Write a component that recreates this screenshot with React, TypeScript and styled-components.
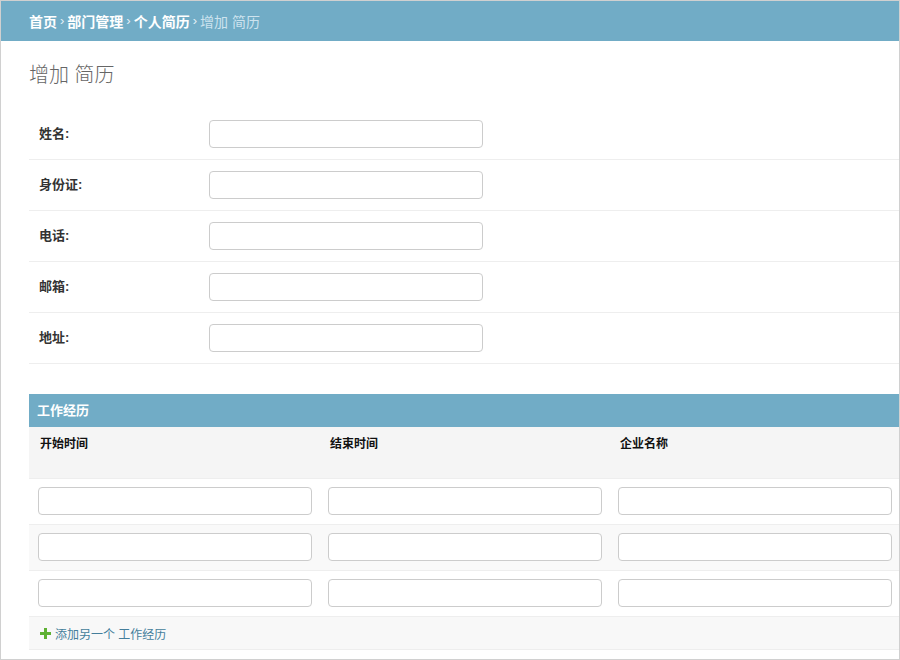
import React from 'react';
import styled, { createGlobalStyle } from 'styled-components';

const GlobalStyle = createGlobalStyle`
  html, body {
    margin: 0;
    padding: 0;
  }
  body {
    font-family: "Liberation Sans", "Noto Sans CJK SC", sans-serif;
    color: #333;
    background: #fff;
  }
  * {
    box-sizing: border-box;
  }
`;

const Page = styled.div`
  width: 900px;
  height: 660px;
  border: 1px solid #d0d0d0;
  overflow: hidden;
  background: #fff;
`;

const Breadcrumbs = styled.div`
  height: 40px;
  background: #71acc6;
  padding: 0 28px 1px;
  display: flex;
  align-items: center;
  font-size: 14px;
  color: #fff;
`;

const Crumb = styled.span<{ $current?: boolean }>`
  font-weight: ${(p) => (p.$current ? 400 : 700)};
  color: ${(p) => (p.$current ? '#cde3ee' : '#fff')};
`;

const Sep = styled.span`
  margin: 0 3px;
  font-size: 13px;
  color: #e4f0f6;
`;

const Content = styled.div`
  padding: 22px 0 0 28px;
`;

const Title = styled.h1`
  margin: 0 0 22px;
  font-size: 20px;
  line-height: 24px;
  font-weight: 300;
  color: #666;
`;

const FormRow = styled.div`
  display: flex;
  align-items: center;
  padding: 11px 10px;
  border-bottom: 1px solid #eee;
`;

const Label = styled.label`
  width: 170px;
  font-size: 13px;
  line-height: 16px;
  margin-top: -1px;
  font-weight: 700;
  color: #333;
`;

const TextInput = styled.input`
  width: 274px;
  height: 28px;
  border: 1px solid #ccc;
  border-radius: 4px;
  padding: 5px 6px;
  background: #fff;
  font-size: 13px;
  outline: none;
`;

const InlineGroup = styled.div`
  margin-top: 30px;
`;

const GroupHeader = styled.h2`
  margin: 0;
  height: 33px;
  line-height: 33px;
  padding: 0 8px;
  background: #71acc6;
  color: #fff;
  font-size: 13px;
  font-weight: 700;
`;

const Grid = styled.div`
  display: grid;
  grid-template-columns: repeat(3, minmax(0, 1fr));
`;

const HeadCell = styled.div`
  height: 52px;
  padding: 9px 11px 0;
  background: #f5f5f5;
  border-bottom: 1px solid #eee;
  font-size: 12px;
  line-height: 17px;
  font-weight: 700;
  color: #111;
`;

const Cell = styled.div<{ $alt?: boolean }>`
  padding: 8px 7px 9px 9px;
  background: ${(p) => (p.$alt ? '#f9f9f9' : '#fff')};
  border-bottom: 1px solid #eee;
`;

const AddRow = styled.div`
  height: 33px;
  display: flex;
  align-items: center;
  gap: 4px;
  padding: 0 11px;
  background: #f8f8f8;
  border-bottom: 1px solid #eee;
  font-size: 12px;
  color: #447e9b;
`;

const PlusIcon = () => (
  <svg width="11" height="11" viewBox="0 0 11 11">
    <path d="M4 0h3v4h4v3H7v4H4V7H0V4h4z" fill="#5eb133" />
  </svg>
);

const fields = ['姓名', '身份证', '电话', '邮箱', '地址'];
const columns = ['开始时间', '结束时间', '企业名称'];
const rows = [0, 1, 2];

export default function App(): JSX.Element {
  return (
    <Page>
      <GlobalStyle />
      <Breadcrumbs>
        <Crumb>首页</Crumb>
        <Sep>›</Sep>
        <Crumb>部门管理</Crumb>
        <Sep>›</Sep>
        <Crumb>个人简历</Crumb>
        <Sep>›</Sep>
        <Crumb $current>增加 简历</Crumb>
      </Breadcrumbs>
      <Content>
        <Title>增加 简历</Title>
        {fields.map((f) => (
          <FormRow key={f}>
            <Label>{f}:</Label>
            <TextInput type="text" />
          </FormRow>
        ))}
        <InlineGroup>
          <GroupHeader>工作经历</GroupHeader>
          <Grid>
            {columns.map((c) => (
              <HeadCell key={c}>{c}</HeadCell>
            ))}
            {rows.map((r) =>
              columns.map((c) => (
                <Cell key={`${r}-${c}`} $alt={r === 1}>
                  <TextInput type="text" />
                </Cell>
              ))
            )}
          </Grid>
          <AddRow>
            <PlusIcon />
            <span>添加另一个 工作经历</span>
          </AddRow>
        </InlineGroup>
      </Content>
    </Page>
  );
}
